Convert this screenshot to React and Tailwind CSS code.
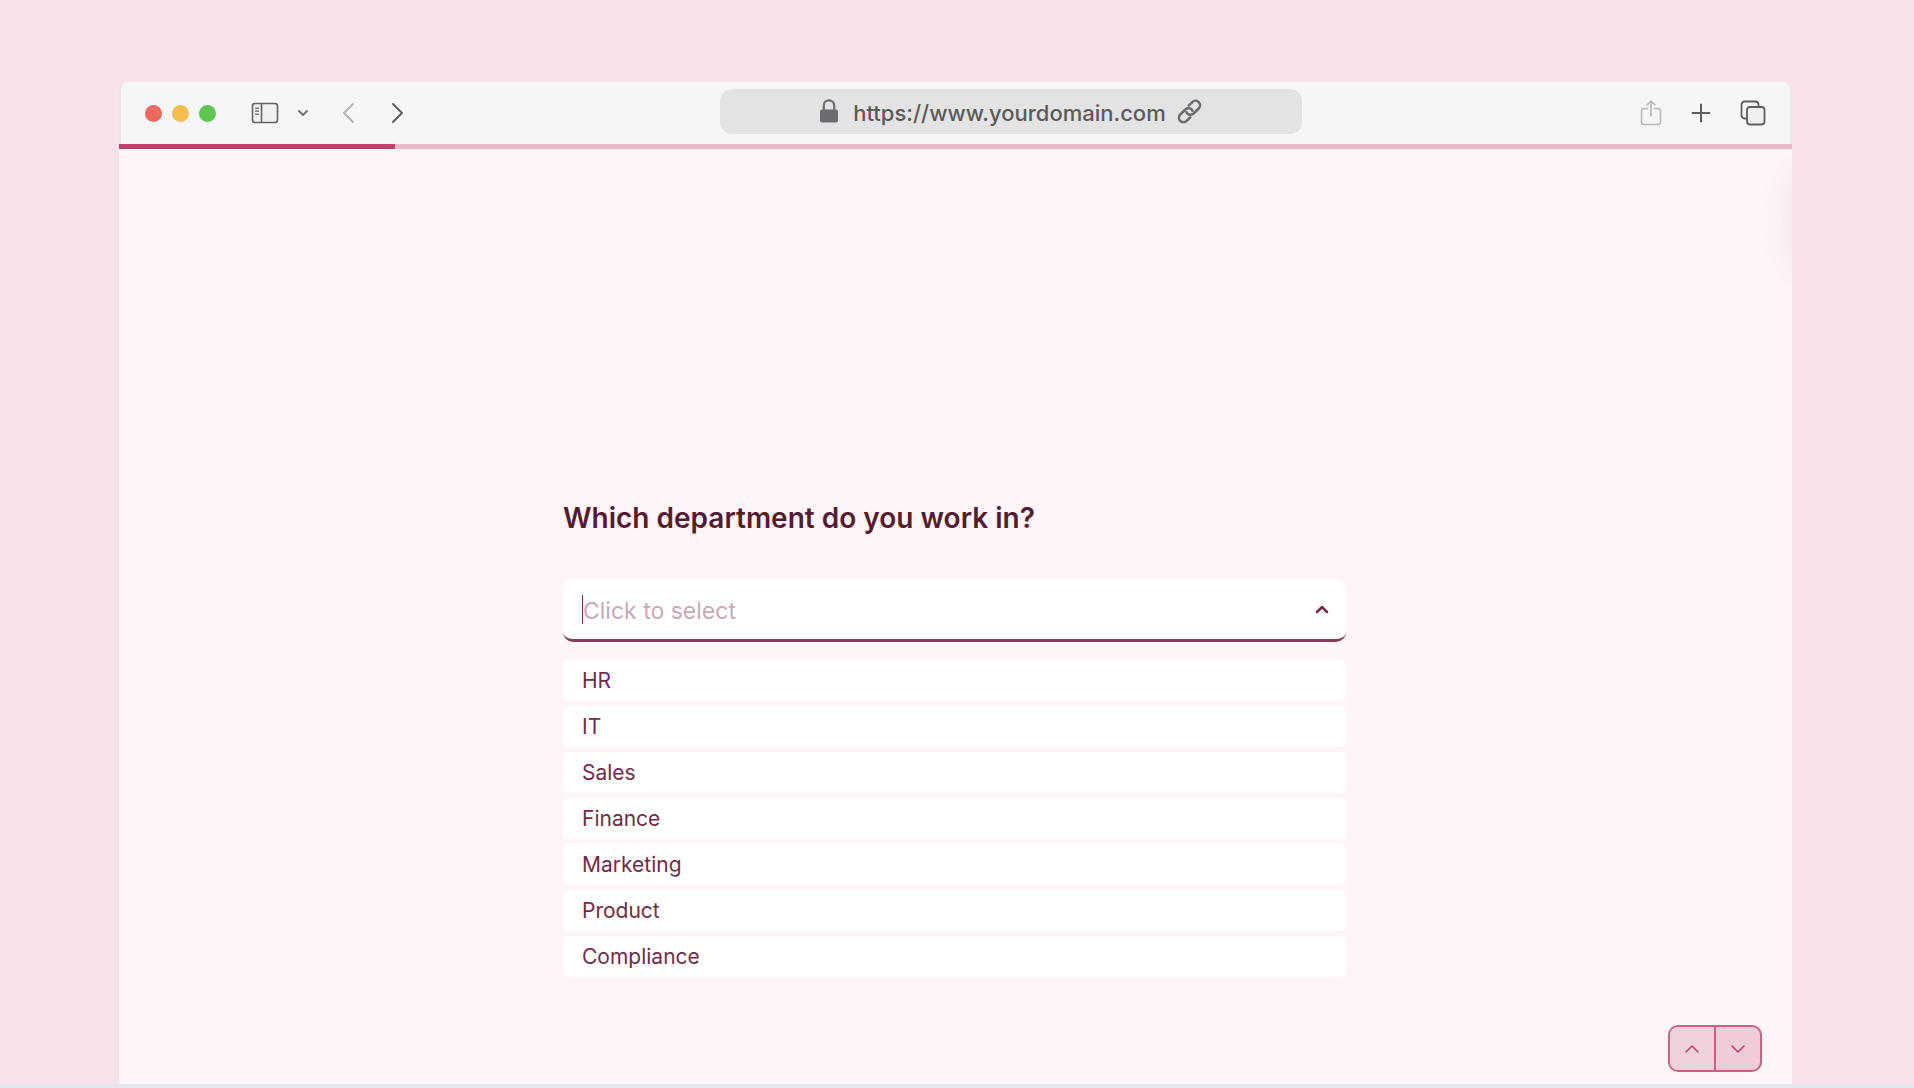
import { useState } from 'react';

const departments = ['HR', 'IT', 'Sales', 'Finance', 'Marketing', 'Product', 'Compliance'];

const SidebarIcon = () => (
  <svg width="28" height="22" viewBox="0 0 28 22" fill="none" stroke="#636363" strokeWidth="1.6" strokeLinecap="round">
    <rect x="1.5" y="1.5" width="25" height="19" rx="2.5" fill="#f0f0f0" />
    <path d="M10.5 1.5v19" />
    <path d="M4.5 6.2h3M4.5 9.2h3M4.5 12.2h3" strokeWidth="1.2" />
  </svg>
);

const Chevron = ({ d, width, height, color, stroke = 2 }) => (
  <svg
    width={width}
    height={height}
    viewBox={`0 0 ${width} ${height}`}
    fill="none"
    stroke={color}
    strokeWidth={stroke}
    strokeLinecap="round"
    strokeLinejoin="round"
  >
    <path d={d} />
  </svg>
);

const LockIcon = () => (
  <svg width="20" height="24" viewBox="0 0 20 24" fill="none">
    <path d="M4.8 11V6.5a5.2 5.2 0 0 1 10.4 0V11" stroke="#6b6c70" strokeWidth="2.2" />
    <rect x="1" y="10.5" width="18" height="13" rx="2" fill="#6b6c70" />
  </svg>
);

const LinkIcon = () => (
  <svg width="27" height="27" viewBox="0 0 24 24" fill="none" stroke="#6b6c70" strokeWidth="2.3" strokeLinecap="round" strokeLinejoin="round">
    <path d="M9.3 12.6a4 4 0 0 0 6.3 1.3l4.6-4.6a4 4 0 0 0-5.7-5.7l-3.2 3.2" />
    <path d="M14.7 11.4a4 4 0 0 0-6.3-1.3l-4.6 4.6a4 4 0 0 0 5.7 5.7l3.2-3.2" />
  </svg>
);

const ShareIcon = () => (
  <svg width="22" height="26" viewBox="0 0 22 26" fill="none" stroke="#b9b9b9" strokeWidth="1.6" strokeLinecap="round" strokeLinejoin="round">
    <path d="M7.5 8.5H4A2.5 2.5 0 0 0 1.5 11v11A2.5 2.5 0 0 0 4 24.5h14a2.5 2.5 0 0 0 2.5-2.5V11A2.5 2.5 0 0 0 18 8.5h-3.5" />
    <path d="M11 16V1.5M7 5l4-4 4 4" />
  </svg>
);

const PlusIcon = () => (
  <svg width="20" height="20" viewBox="0 0 20 20" fill="none" stroke="#5f5f5f" strokeWidth="2" strokeLinecap="round">
    <path d="M10 1.5v17M1.5 10h17" />
  </svg>
);

const TabsIcon = () => (
  <svg width="26" height="26" viewBox="0 0 26 26" stroke="#5f5f5f" strokeWidth="1.8">
    <rect x="1.5" y="1.5" width="17" height="17" rx="3" fill="#f4f5f7" />
    <rect x="7" y="7" width="17.5" height="17.5" rx="3" fill="#f0f0f0" />
  </svg>
);

const BrowserBar = () => (
  <header className="grid h-[62px] grid-cols-[599fr_583fr_488fr] items-center rounded-t-lg border-x-2 border-[#ebe5e8] bg-[#f4f6f8]">
    <div className="flex items-center pl-6">
      <div className="flex gap-[10px]">
        <span className="size-[17px] rounded-full bg-[#ec6a5e]" />
        <span className="size-[17px] rounded-full bg-[#f4bf4f]" />
        <span className="size-[17px] rounded-full bg-[#61c554]" />
      </div>
      <button type="button" aria-label="Toggle sidebar" className="ml-[35px]">
        <SidebarIcon />
      </button>
      <button type="button" aria-label="Sidebar options" className="ml-[18px]">
        <Chevron width={12} height={8} d="M2 2l4 4 4-4" color="#717171" />
      </button>
      <button type="button" aria-label="Back" className="ml-8">
        <Chevron width={14} height={22} d="M12 2L3 11l9 9" color="#b5b5b5" />
      </button>
      <button type="button" aria-label="Forward" className="ml-9">
        <Chevron width={14} height={22} d="M2 2l9 9-9 9" color="#5f5f5f" />
      </button>
    </div>
    <div className="mb-1 flex h-[45px] items-center justify-center gap-[14px] rounded-xl bg-[#e3e3e3] text-[22px] font-medium text-[#5a5a5a]">
      <LockIcon />
      <span className="flex items-center gap-[10px]">
        <span className="pt-1">https://www.yourdomain.com</span>
        <LinkIcon />
      </span>
    </div>
    <div className="flex items-center justify-end gap-[29px] pr-6">
      <button type="button" aria-label="Share">
        <ShareIcon />
      </button>
      <button type="button" aria-label="New tab">
        <PlusIcon />
      </button>
      <button type="button" aria-label="Show tabs">
        <TabsIcon />
      </button>
    </div>
  </header>
);

const App = () => {
  const [query, setQuery] = useState('');
  const [selected, setSelected] = useState('');
  const [open, setOpen] = useState(true);

  const filtered = departments.filter(d =>
    d.toLowerCase().includes(query.toLowerCase())
  );

  const handleSelect = (name) => {
    setSelected(name);
    setQuery('');
    setOpen(false);
  };

  return (
    <div className="flex min-h-screen flex-col bg-[#f7e2e9] font-[Inter,sans-serif]">
      <div className="mr-[122px] ml-[119px] flex flex-1 flex-col pt-[82px]">
        <BrowserBar />

        {/* Survey progress */}
        <div role="progressbar" aria-label="Progress" aria-valuenow={17} className="h-[5px] bg-[#e8bac9]">
          <div className="h-full w-[16.5%] bg-[#bf4068]" />
        </div>

        <main className="relative flex flex-1 flex-col overflow-hidden bg-[#fff5f9] pr-[2px]">
          <div className="absolute top-8 -right-8 h-20 w-4 rounded-full shadow-[0_0_40px_8px_rgba(80,40,55,0.18)]" />

          <div className="mx-auto w-full max-w-[783px] pt-[346px]">
            <label htmlFor="department" className="block text-[28px] leading-[46px] font-semibold text-[#541c33]">
              Which department do you work in?
            </label>

            <div className="relative mt-[38px] flex h-[63px] items-center rounded-[10px] border-b-[3px] border-[#84405a] bg-white pr-4 pl-5">
              {!query && <span className="absolute left-[19px] h-[29px] w-px bg-[#7a2c4a]" />}
              <input
                id="department"
                type="text"
                autoComplete="off"
                placeholder={selected || 'Click to select'}
                value={query}
                onChange={(e) => setQuery(e.target.value)}
                onFocus={() => setOpen(true)}
                className="min-w-0 flex-1 bg-transparent pt-1 text-[23px] text-[#732b47] outline-none placeholder:text-[#c9a9b5]"
              />
              <button type="button" aria-label="Toggle options" onClick={() => setOpen(!open)}>
                <Chevron width={16} height={12} d="M3 9l5-5 5 5" color="#732b47" stroke={2.5} />
              </button>
            </div>

            {open && (
              <ul className="mt-[18px] flex flex-col gap-[5px]">
                {filtered.map(name => (
                  <li key={name}>
                    <button
                      type="button"
                      onClick={() => handleSelect(name)}
                      className="block h-[41px] w-full rounded-[5px] bg-white px-[19px] text-left text-[21px] text-[#732b47]"
                    >
                      {name}
                    </button>
                  </li>
                ))}
              </ul>
            )}
          </div>

          <div className="mt-auto mr-7 mb-3 flex h-[47px] self-end overflow-hidden rounded-[10px] border-2 border-[#cd6085] bg-[#efcdd8]">
            <button type="button" aria-label="Previous question" className="flex w-11 items-center justify-center bg-[#efd1da]">
              <Chevron width={16} height={12} d="M2 9l6-6 6 6" color="#c2406b" stroke={1.6} />
            </button>
            <button type="button" aria-label="Next question" className="flex w-[46px] items-center justify-center border-l-2 border-[#cd6085]">
              <Chevron width={16} height={12} d="M2 3l6 6 6-6" color="#c2406b" stroke={1.6} />
            </button>
          </div>
        </main>
      </div>
      <div className="h-1 bg-[#e4e7ec]" />
    </div>
  );
};

export default App;
